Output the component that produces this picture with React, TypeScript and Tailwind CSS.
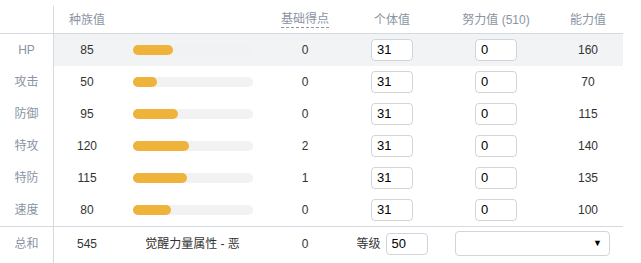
import React from 'react';

type Stat = { label: string; base: number; pt: number; iv: number; ev: number; total: number };

const stats: Stat[] = [
  { label: 'HP', base: 85, pt: 0, iv: 31, ev: 0, total: 160 },
  { label: '攻击', base: 50, pt: 0, iv: 31, ev: 0, total: 70 },
  { label: '防御', base: 95, pt: 0, iv: 31, ev: 0, total: 115 },
  { label: '特攻', base: 120, pt: 2, iv: 31, ev: 0, total: 140 },
  { label: '特防', base: 115, pt: 1, iv: 31, ev: 0, total: 135 },
  { label: '速度', base: 80, pt: 0, iv: 31, ev: 0, total: 100 },
];

const cols = 'grid grid-cols-[54px_66px_145px_80px_94px_114px_70px] items-stretch';
const cell = 'flex items-center justify-center';

const NumInput: React.FC<{ value: number }> = ({ value }) => (
  <div className="w-[42px] h-[22px] rounded-[4px] border border-[#d0d5dc] bg-white flex items-center pl-[5px] text-[13px] text-black">
    {value}
  </div>
);

export default function App() {
  return (
    <div
      className="w-[641px] h-[263px] bg-white overflow-hidden pt-[6px] text-[12px] text-[#333]"
      style={{ fontFamily: '"Liberation Sans", "Noto Sans CJK SC", sans-serif' }}
    >
      <div className="w-[623px]">
        {/* header */}
        <div className={`${cols} h-[28px] border-b border-[#d5d9e0] text-[#8a94a3]`}>
          <div className="border-r border-[#d5d9e0]" />
          <div className={cell}>种族值</div>
          <div />
          <div className={cell}>
            <span className="border-b border-dashed border-[#8a94a3] leading-[15px]">基础得点</span>
          </div>
          <div className={cell}>个体值</div>
          <div className={cell}>努力值 (510)</div>
          <div className={cell}>能力值</div>
        </div>

        {stats.map((s, i) => (
          <div key={s.label} className={`${cols} h-[32px]`}>
            <div className={`${cell} border-r border-[#d5d9e0] text-[#8a94a3] bg-white`}>{s.label}</div>
            <div className={`${cell} ${i === 0 ? 'bg-[#f2f3f5]' : ''}`}>{s.base}</div>
            <div className={`flex items-center pl-[13px] ${i === 0 ? 'bg-[#f2f3f5]' : ''}`}>
              <div className="w-[120px] h-[10px] rounded-full bg-[#f2f2f3]">
                <div
                  className="h-full rounded-full bg-[#efb33b]"
                  style={{ width: `${Math.round((s.base / 255) * 120)}px` }}
                />
              </div>
            </div>
            <div className={`${cell} ${i === 0 ? 'bg-[#f2f3f5]' : ''}`}>{s.pt}</div>
            <div className={`${cell} ${i === 0 ? 'bg-[#f2f3f5]' : ''}`}>
              <NumInput value={s.iv} />
            </div>
            <div className={`${cell} ${i === 0 ? 'bg-[#f2f3f5]' : ''}`}>
              <NumInput value={s.ev} />
            </div>
            <div className={`${cell} ${i === 0 ? 'bg-[#f2f3f5]' : ''}`}>{s.total}</div>
          </div>
        ))}

        {/* total row */}
        <div className={`${cols} h-[37px] border-t border-[#d5d9e0]`}>
          <div className={`${cell} border-r border-[#d5d9e0] text-[#8a94a3] pb-[3px]`}>总和</div>
          <div className={`${cell} pb-[3px]`}>545</div>
          <div className={`${cell} pb-[3px]`}>觉醒力量属性 - 恶</div>
          <div className={`${cell} pb-[3px]`}>0</div>
          <div className={`${cell} gap-[5px] pb-[3px]`}>
            <span>等级</span>
            <div className="w-[42px] h-[22px] rounded-[4px] border border-[#d0d5dc] flex items-center pl-[5px] text-[13px] text-black">
              50
            </div>
          </div>
          <div className="col-span-2 flex items-center pl-[16px] pb-[3px]">
            <div className="w-[155px] h-[25px] rounded-[4px] border border-[#d0d5dc] flex items-center justify-end pr-[7px]">
              <span className="text-[9px] text-black leading-none">▼</span>
            </div>
          </div>
        </div>
      </div>
    </div>
  );
}
